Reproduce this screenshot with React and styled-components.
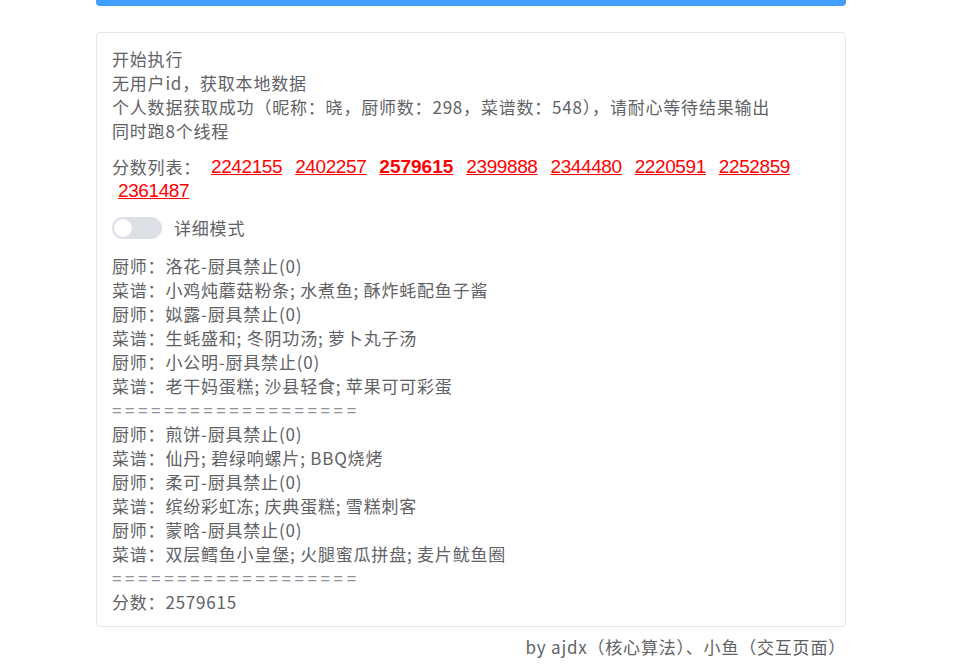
import React, { useState } from "react";
import styled, { createGlobalStyle } from "styled-components";

const GlobalStyle = createGlobalStyle`
  html, body {
    margin: 0;
    padding: 0;
    background: #ffffff;
  }
  body {
    font-family: "Noto Sans CJK SC", "Liberation Sans", sans-serif;
    color: #606266;
  }
`;

const Viewport = styled.div`
  padding-right: 16px;
`;

const Page = styled.div`
  width: 750px;
  margin: 0 auto;
`;

const TopBar = styled.div`
  height: 6px;
  background: #409eff;
  border-radius: 0 0 4px 4px;
`;

const Card = styled.div`
  margin-top: 26px;
  border: 1px solid #e4e7ed;
  border-radius: 4px;
  padding: 14px 15px 12px;
  font-size: 17px;
  letter-spacing: 0.8px;
  line-height: 24px;
  color: #606266;
`;

const Line = styled.div`
  white-space: nowrap;
`;

const Separator = styled(Line)`
  color: #909399;
  letter-spacing: 3.6px;
`;

const ScoreList = styled.div`
  margin-top: 12px;
  line-height: 24px;
`;

const Label = styled.span`
  margin-right: 4px;
`;

const ScoreLink = styled.a`
  display: inline-block;
  vertical-align: top;
  margin: 0 7px 0 6px;
  color: #ff0000;
  font-size: 19px;
  line-height: 24px;
  font-family: "Liberation Sans", sans-serif;
  letter-spacing: ${(p) => (p.$best ? "0px" : "-0.4px")};
  text-decoration: underline;
  font-weight: ${(p) => (p.$best ? 700 : 400)};
  cursor: pointer;
`;

const SwitchRow = styled.label`
  display: flex;
  align-items: center;
  gap: 12px;
  margin: 13px 0 14px;
  cursor: pointer;
`;

const SwitchTrack = styled.span`
  position: relative;
  width: 50px;
  height: 22px;
  border-radius: 11px;
  background: ${(p) => (p.$on ? "#409eff" : "#dcdfe6")};
  transition: background 0.2s;
`;

const SwitchKnob = styled.span`
  position: absolute;
  top: 2px;
  left: ${(p) => (p.$on ? "30px" : "2px")};
  width: 18px;
  height: 18px;
  border-radius: 50%;
  background: #ffffff;
  transition: left 0.2s;
`;

const Footer = styled.div`
  text-align: right;
  padding: 8px 0 0 0;
  font-size: 17px;
  letter-spacing: 0.8px;
  line-height: 24px;
  color: #606266;
`;

const scores = [
  "2242155",
  "2402257",
  "2579615",
  "2399888",
  "2344480",
  "2220591",
  "2252859",
  "2361487",
];

const logLines = [
  "厨师：洛花-厨具禁止(0)",
  "菜谱：小鸡炖蘑菇粉条; 水煮鱼; 酥炸蚝配鱼子酱",
  "厨师：姒露-厨具禁止(0)",
  "菜谱：生蚝盛和; 冬阴功汤; 萝卜丸子汤",
  "厨师：小公明-厨具禁止(0)",
  "菜谱：老干妈蛋糕; 沙县轻食; 苹果可可彩蛋",
  "===================",
  "厨师：煎饼-厨具禁止(0)",
  "菜谱：仙丹; 碧绿响螺片; BBQ烧烤",
  "厨师：柔可-厨具禁止(0)",
  "菜谱：缤纷彩虹冻; 庆典蛋糕; 雪糕刺客",
  "厨师：蒙晗-厨具禁止(0)",
  "菜谱：双层鳕鱼小皇堡; 火腿蜜瓜拼盘; 麦片鱿鱼圈",
  "===================",
  "分数：2579615",
];

export default function App() {
  const [detail, setDetail] = useState(false);
  return (
    <Viewport>
      <GlobalStyle />
      <Page>
        <TopBar />
        <Card>
          <Line>开始执行</Line>
          <Line>无用户id，获取本地数据</Line>
          <Line>个人数据获取成功（昵称：晓，厨师数：298，菜谱数：548），请耐心等待结果输出</Line>
          <Line>同时跑8个线程</Line>
          <ScoreList>
            <Label>分数列表：</Label>
            {scores.map((s) => (
              <ScoreLink key={s} $best={s === "2579615"}>
                {s}
              </ScoreLink>
            ))}
          </ScoreList>
          <SwitchRow onClick={() => setDetail(!detail)}>
            <SwitchTrack $on={detail}>
              <SwitchKnob $on={detail} />
            </SwitchTrack>
            <span>详细模式</span>
          </SwitchRow>
          {logLines.map((l, i) =>
            l.startsWith("=") ? (
              <Separator key={i}>{l}</Separator>
            ) : (
              <Line key={i}>{l}</Line>
            )
          )}
        </Card>
        <Footer>by ajdx（核心算法）、小鱼（交互页面）</Footer>
      </Page>
    </Viewport>
  );
}
